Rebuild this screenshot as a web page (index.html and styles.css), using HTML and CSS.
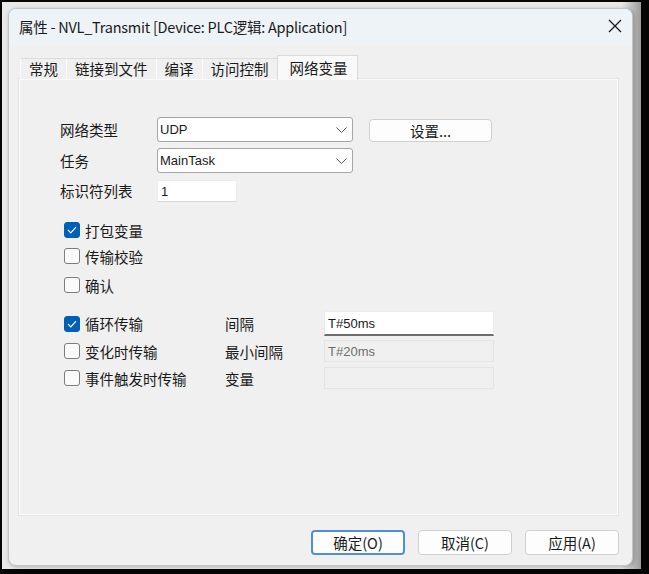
FILE: index.html
```html
<!DOCTYPE html>
<html lang="zh-CN">
<head>
<meta charset="utf-8">
<title>属性 - NVL_Transmit</title>
<link rel="stylesheet" href="styles.css">
</head>
<body>
<div class="screen">
  <div class="window">
    <div class="titlebar">
      <span class="title">属性 - NVL_Transmit [Device: PLC逻辑: Application]</span>
      <svg class="close" width="14" height="14" viewBox="0 0 14 14"><path d="M1 1L13 13M13 1L1 13" stroke="#1b1b1b" stroke-width="1.3" fill="none"/></svg>
    </div>
    <div class="content">
      <div class="tabs">
        <div class="tab">常规</div>
        <div class="tab">链接到文件</div>
        <div class="tab">编译</div>
        <div class="tab">访问控制</div>
        <div class="tab active">网络变量</div>
      </div>
      <div class="panel">
        <div class="form-top">
          <span class="label">网络类型</span>
          <div class="select"><span class="latin">UDP</span><svg class="chev" width="11" height="6" viewBox="0 0 11 6"><path d="M0.5 0.5L5.5 5.5L10.5 0.5" stroke="#5a5a5a" stroke-width="1" fill="none"/></svg></div>
          <div class="btn setbtn">设置...</div>
          <span class="label">任务</span>
          <div class="select"><span class="latin">MainTask</span><svg class="chev" width="11" height="6" viewBox="0 0 11 6"><path d="M0.5 0.5L5.5 5.5L10.5 0.5" stroke="#5a5a5a" stroke-width="1" fill="none"/></svg></div>
          <span></span>
          <span class="label">标识符列表</span>
          <div class="input small"><span class="latin">1</span></div>
          <span></span>
        </div>
        <div class="checks">
          <div class="check-row"><span class="cb on"><svg width="10" height="8" viewBox="0 0 10 8"><path d="M1 4L3.8 6.8L9 1.2" stroke="#fff" stroke-width="1.2" fill="none"/></svg></span><span>打包变量</span></div>
          <div class="check-row r2"><span class="cb"></span><span>传输校验</span></div>
          <div class="check-row r3"><span class="cb"></span><span>确认</span></div>
        </div>
        <div class="form-bottom">
          <div class="check-row"><span class="cb on"><svg width="10" height="8" viewBox="0 0 10 8"><path d="M1 4L3.8 6.8L9 1.2" stroke="#fff" stroke-width="1.2" fill="none"/></svg></span><span>循环传输</span></div>
          <span class="label">间隔</span>
          <div class="input wide active-in"><span class="latin">T#50ms</span></div>
          <div class="check-row"><span class="cb"></span><span>变化时传输</span></div>
          <span class="label">最小间隔</span>
          <div class="input wide disabled"><span class="latin">T#20ms</span></div>
          <div class="check-row"><span class="cb"></span><span>事件触发时传输</span></div>
          <span class="label">变量</span>
          <div class="input wide disabled"></div>
        </div>
      </div>
      <div class="buttons">
        <div class="btn dlg default">确定(O)</div>
        <div class="btn dlg">取消(C)</div>
        <div class="btn dlg">应用(A)</div>
      </div>
    </div>
  </div>
</div>
</body>
</html>
```
FILE: styles.css
```css
html, body {
  margin: 0;
  padding: 0;
  background: #050505;
}
body {
  font-family: "Noto Sans CJK SC", "Noto Sans", sans-serif;
  font-size: 14.5px;
  color: #1a1a1a;
}
.screen {
  margin: 2px 0 0 2px;
  width: 639px;
  height: 567px;
  box-sizing: border-box;
  padding: 6px 8px 3px 6px;
  background: linear-gradient(to right, #e9e9e9 0%, #e9e9e9 97%, #9a9a9a 100%);
}
.window {
  width: 625px;
  height: 558px;
  box-sizing: border-box;
  border: 1px solid #c4c4c4;
  border-radius: 8px;
  background: #f0f0f0;
  overflow: hidden;
  box-shadow: 1px 1px 4px rgba(0,0,0,0.25);
  display: flex;
  flex-direction: column;
}
.titlebar {
  height: 36px;
  flex: none;
  background: #eef3f8;
  display: flex;
  align-items: center;
  justify-content: space-between;
  padding: 0 10px 0 10px;
  box-sizing: border-box;
}
.title {
  font-size: 14.5px;
  letter-spacing: -0.25px;
  color: #1a1a1a;
  margin-top: -1px;
}
.close {
  margin-top: -2px;
}
.content {
  flex: 1;
  padding: 10px 14px 0 10px;
  display: flex;
  flex-direction: column;
}
.tabs {
  display: flex;
  align-items: flex-end;
  height: 24px;
  padding-left: 1px;
  position: relative;
  z-index: 2;
}
.tab {
  height: 21px;
  box-sizing: border-box;
  padding: 0 8px;
  line-height: 19px;
  border: 1px solid #dcdcdc;
  border-bottom: none;
  border-left-color: #fbfbfb;
  background: #f0f0f0;
  margin-right: -1px;
}
.tab.active {
  height: 25px;
  margin-bottom: -1px;
  padding: 0 9px 0 12px;
  margin-left: 0;
  background: #f9f9f9;
  border-color: #d9d9d9;
  line-height: 23px;
}
.panel {
  height: 436px;
  box-sizing: border-box;
  border: 1px solid #fbfbfb;
  box-shadow: 0 0 0 1px #e3e3e3;
  padding: 37px 0 0 40px;
}
.label {
  white-space: nowrap;
}
.latin {
  font-family: "Liberation Sans", Arial, sans-serif;
  font-size: 13px;
}
.form-top {
  display: grid;
  grid-template-columns: 81px 196px 123px;
  grid-template-rows: 25px 25px 22px;
  row-gap: 6px;
  column-gap: 16px;
  align-items: center;
}
.form-top .small {
  margin-top: 2px;
}
.select {
  height: 25px;
  box-sizing: border-box;
  border: 1px solid #a6a6a6;
  border-radius: 3px;
  background: #fff;
  display: flex;
  align-items: center;
  justify-content: space-between;
  padding: 0 5px 0 2px;
}
.btn {
  box-sizing: border-box;
  border: 1px solid #d0d0d0;
  border-radius: 4px;
  background: #fdfdfd;
  display: flex;
  align-items: center;
  justify-content: center;
}
.setbtn {
  height: 23px;
  margin-top: 1px;
}
.input {
  box-sizing: border-box;
  background: #fff;
  display: flex;
  align-items: center;
  padding: 0 3px;
}
.input.small {
  width: 80px;
  height: 22px;
  border: 1px solid #ededed;
  border-bottom-color: #d8d8d8;
}
.checks {
  margin-top: 18px;
  display: flex;
  flex-direction: column;
}
.check-row {
  display: flex;
  align-items: center;
  gap: 5px;
  height: 22px;
  padding-left: 4px;
}
.checks .r2 { margin-top: 4px; }
.checks .r3 { margin-top: 7px; }
.cb {
  width: 16px;
  height: 16px;
  box-sizing: border-box;
  border: 1px solid #7d7d7d;
  border-radius: 3px;
  background: #fbfbfb;
  display: flex;
  align-items: center;
  justify-content: center;
  flex: none;
}
.cb.on {
  background: #005fb8;
  border-color: #005fb8;
}
.form-bottom {
  margin-top: 15px;
  display: grid;
  grid-template-columns: 165px 99px 170px;
  grid-template-rows: 25px 22px 22px;
  row-gap: 4px;
  align-items: center;
}
.form-bottom > :nth-child(7),
.form-bottom > :nth-child(8),
.form-bottom > :nth-child(9) {
  margin-top: 2px;
}
.input.wide {
  height: 100%;
}
.input.active-in {
  border: 1px solid #ececec;
  border-bottom: 2px solid #6e6e6e;
}
.input.disabled {
  background: #f0f0f0;
  border: 1px solid #e4e4e4;
  color: #6d6d6d;
}
.buttons {
  display: flex;
  justify-content: flex-end;
  gap: 13px;
  margin-top: 15px;
  margin-right: -1px;
}
.btn.dlg {
  width: 94px;
  height: 25px;
}
.btn.default {
  border: 2px solid #4f8fd6;
}
```
